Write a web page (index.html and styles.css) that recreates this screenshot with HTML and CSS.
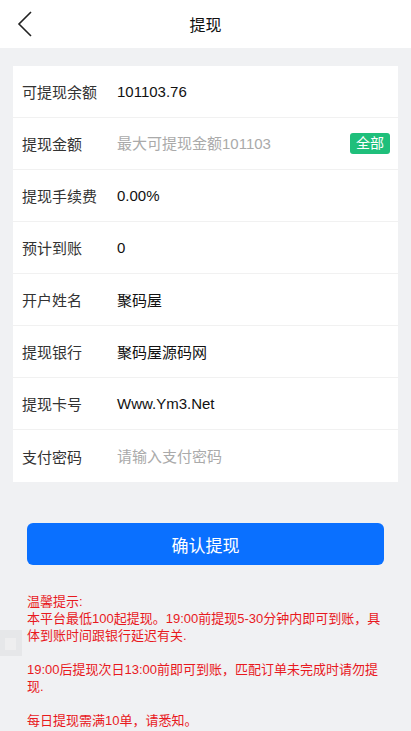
FILE: index.html
```html
<!DOCTYPE html>
<html lang="zh-CN">
<head>
  <meta charset="UTF-8" />
  <meta name="viewport" content="width=device-width, initial-scale=1.0"/>
  <title>提现</title>
  <link rel="stylesheet" href="styles.css">
</head>
<body>
  <div class="header">
    <a class="back" href="#">
      <svg width="16" height="26" viewBox="0 0 16 26"><path d="M14 1 L2 13 L14 25" fill="none" stroke="#222" stroke-width="1.6"/></svg>
    </a>
    <div class="title">提现</div>
  </div>

  <div class="card">
    <div class="row"><span class="label">可提现余额</span><span class="value">101103.76</span></div>
    <div class="row">
      <span class="label">提现金额</span>
      <input class="field" type="text" placeholder="最大可提现金额101103" />
      <span class="all-btn">全部</span>
    </div>
    <div class="row"><span class="label">提现手续费</span><span class="value">0.00%</span></div>
    <div class="row"><span class="label">预计到账</span><span class="value">0</span></div>
    <div class="row"><span class="label">开户姓名</span><span class="value">聚码屋</span></div>
    <div class="row"><span class="label">提现银行</span><span class="value">聚码屋源码网</span></div>
    <div class="row"><span class="label">提现卡号</span><span class="value">Www.Ym3.Net</span></div>
    <div class="row"><span class="label">支付密码</span><input class="field" type="password" placeholder="请输入支付密码" /></div>
  </div>

  <button class="submit">确认提现</button>

  <div class="tips">
    <p>温馨提示:<br>本平台最低100起提现。19:00前提现5-30分钟内即可到账，具体到账时间跟银行延迟有关.</p>
    <p>19:00后提现次日13:00前即可到账，匹配订单未完成时请勿提现.</p>
    <p>每日提现需满10单，请悉知。</p>
  </div>

  <div class="float-box"></div>
</body>
</html>
```

FILE: styles.css
```css
body {
  margin: 0;
  background: #f0f1f3;
  font-family: "Liberation Sans", "Noto Sans CJK SC", sans-serif;
  color: #222;
}

.header {
  height: 48px;
  background: white;
  display: flex;
  align-items: center;
  justify-content: center;
  position: relative;
}

.back {
  position: absolute;
  left: 17px;
  top: 11px;
}

.title {
  font-size: 16px;
  color: #111;
}

.card {
  margin: 18px 13px 0;
  background: white;
}

.row {
  height: 52px;
  display: flex;
  align-items: center;
  padding: 0 9px;
  border-bottom: 1px solid #f1f1f1;
  box-sizing: border-box;
  font-size: 15px;
}

.row:last-child {
  border-bottom: none;
}

.label {
  width: 95px;
  color: #333;
  flex-shrink: 0;
}

.value {
  color: #111;
}

.field {
  flex: 1;
  border: none;
  outline: none;
  padding: 0;
  font-size: 15px;
  font-family: inherit;
  background: transparent;
}

.field::placeholder {
  color: #aaa;
}

.all-btn {
  background: #1fbf7b;
  color: white;
  font-size: 14px;
  padding: 2px 6px;
  margin-right: -1px;
  border-radius: 3px;
  line-height: 17px;
}

.submit {
  display: block;
  margin: 41px 27px 0;
  width: calc(100% - 54px);
  height: 42px;
  border: none;
  border-radius: 6px;
  background: #0a70ff;
  color: white;
  font-size: 17px;
  font-family: inherit;
}

.tips {
  margin: 28px 27px 0;
  color: #e8191e;
  font-size: 13px;
  line-height: 17px;
}

.tips p {
  margin: 0 0 17px;
}

.float-box {
  position: absolute;
  left: 0;
  top: 630px;
  width: 22px;
  height: 26px;
  background: #e6e7e9;
  box-sizing: border-box;
  padding: 8px 6px 6px 5px;
}

.float-box::after {
  content: "";
  display: block;
  width: 11px;
  height: 12px;
  background: #eeeeef;
}
```
